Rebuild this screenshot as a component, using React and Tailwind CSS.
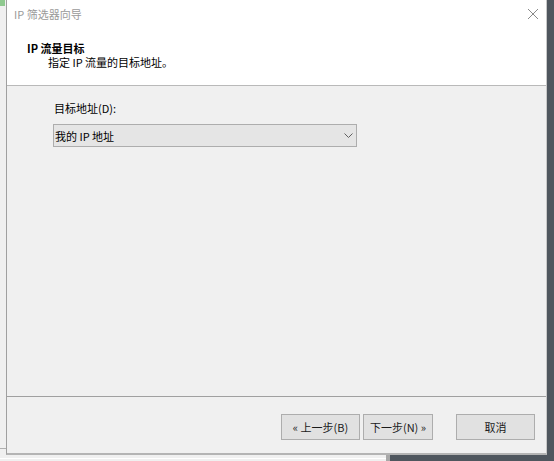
const font = { fontFamily: '"Noto Sans CJK SC", "Noto Sans", sans-serif' };

const Button = ({ children, className = "" }) => (
  <button
    type="button"
    className={`h-[26px] bg-[#e1e1e1] border border-[#adadad] text-[11px] leading-[14px] text-[#1a1a1a] ${className}`}
  >
    {children}
  </button>
);

const App = () => {
  return (
    <div
      className="w-[554px] h-[461px] flex flex-col overflow-hidden bg-[#4f565e]"
      style={font}
    >
      <div className="flex h-[455px]">
        {/* window behind, left edge */}
        <div className="w-[6px] bg-[#f0f0f0] flex flex-col">
          <div className="w-[5px] h-[6px] bg-[#8fc98f]" />
          <div className="flex-1" />
          <div className="h-[7px] border-t border-[#b0b0b0]" />
        </div>

        {/* dialog */}
        <div className="w-[541px] flex flex-col border-l border-r border-b-2 border-l-[#a0a0a0] border-r-[#c8c8c8] border-b-[#b4b4b4]">
          <div className="h-[86px] bg-white border-b border-[#b9b9b9] flex flex-col">
            <div className="flex justify-between items-start pt-[6px] pl-[7px] pr-[7px]">
              <span className="text-[11px] leading-[16px] text-[#9a9a9a]">IP 筛选器向导</span>
              <svg width="12" height="12" viewBox="0 0 12 12" className="mt-[2px]">
                <path d="M1 1 L11 11 M11 1 L1 11" stroke="#8a8a8a" strokeWidth="1" fill="none" />
              </svg>
            </div>
            <div className="pl-[20px] pt-[19px]">
              <div className="text-[11px] leading-[14px] font-bold text-black">IP 流量目标</div>
              <div className="pl-[21px] text-[11px] leading-[14px] text-black">
                指定 IP 流量的目标地址。
              </div>
            </div>
          </div>

          <div className="flex-1 bg-[#f0f0f0] pt-[15px] pl-[46px]">
            <div className="pl-[1px] text-[11px] leading-[14px] text-black">目标地址(D):</div>
            <div className="mt-[9px] w-[304px] h-[23px] bg-[#e5e5e5] border border-[#adadad] flex items-center justify-between pl-[1px] pr-[3px]">
              <span className="text-[11px] leading-[14px] text-black">我的 IP 地址</span>
              <svg width="9" height="5" viewBox="0 0 9 5">
                <polyline points="0.5,0.5 4.5,4.5 8.5,0.5" stroke="#606060" strokeWidth="1" fill="none" />
              </svg>
            </div>
          </div>

          <div className="h-[57px] bg-[#f0f0f0] border-t border-[#a0a0a0] flex justify-end items-start pt-[17px] pr-[11px]">
            <Button className="w-[79px]">« 上一步(B)</Button>
            <Button className="w-[70px] ml-[3px]">下一步(N) »</Button>
            <Button className="w-[79px] ml-[23px]">取消</Button>
          </div>
        </div>

        <div className="flex-1 bg-[#4f565e]" />
      </div>

      <div className="flex h-[6px]">
        <div className="w-[390px] bg-[#f0f0f0] border-r-4 border-[#a8a8a8] flex flex-col">
          <div className="h-[3px]" />
          <div className="h-[1px] bg-white" />
        </div>
        <div className="flex-1 bg-[#4f565e]" />
      </div>
    </div>
  );
};

export default App;
